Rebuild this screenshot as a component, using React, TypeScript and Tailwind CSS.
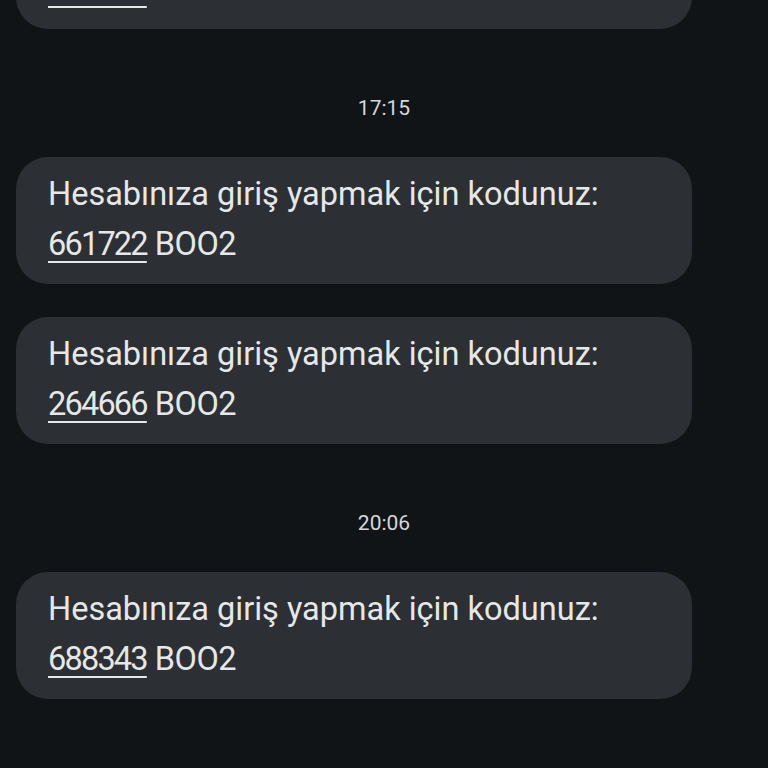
import React from "react";

type Item =
    | { kind: "msg"; code: string }
    | { kind: "time"; label: string };

const items: Item[] = [
    { kind: "msg", code: "417350" },
    { kind: "time", label: "17:15" },
    { kind: "msg", code: "661722" },
    { kind: "msg", code: "264666" },
    { kind: "time", label: "20:06" },
    { kind: "msg", code: "688343" },
];

function Bubble({ code }: { code: string }) {
    return (
        <div className="ml-4 w-[676px] rounded-[32px] bg-[#2c2f33] pl-8 pr-6 pt-3 pb-[15px] text-[32.5px] leading-[50px] text-[#e6e7e9]">
            <div>Hesabınıza giriş yapmak için kodunuz:</div>
            <div>
                <span className="tracking-[-1.8px] underline decoration-2 underline-offset-[6px]">{code}</span>{" "}
                <span className="tracking-[-0.5px]">BOO2</span>
            </div>
        </div>
    );
}

function TimeStamp({ label }: { label: string }) {
    return (
        <div className="flex h-8 items-center justify-center text-[21px] text-[#d5d7da]">
            {label}
        </div>
    );
}

export default function App() {
    return (
        <div
            className="h-[768px] w-[768px] overflow-hidden bg-[#111417]"
            style={{ fontFamily: "Roboto, 'Noto Sans', sans-serif" }}
        >
            <div className="-mt-[98px] flex flex-col">
                {items.map((item, i) => {
                    const prev = items[i - 1];
                    if (item.kind === "time") {
                        return (
                            <div key={i} className="pt-16 pb-8">
                                <TimeStamp label={item.label} />
                            </div>
                        );
                    }
                    return (
                        <div key={i} className={prev && prev.kind === "msg" ? "mt-[33px]" : ""}>
                            <Bubble code={item.code} />
                        </div>
                    );
                })}
            </div>
        </div>
    );
}
